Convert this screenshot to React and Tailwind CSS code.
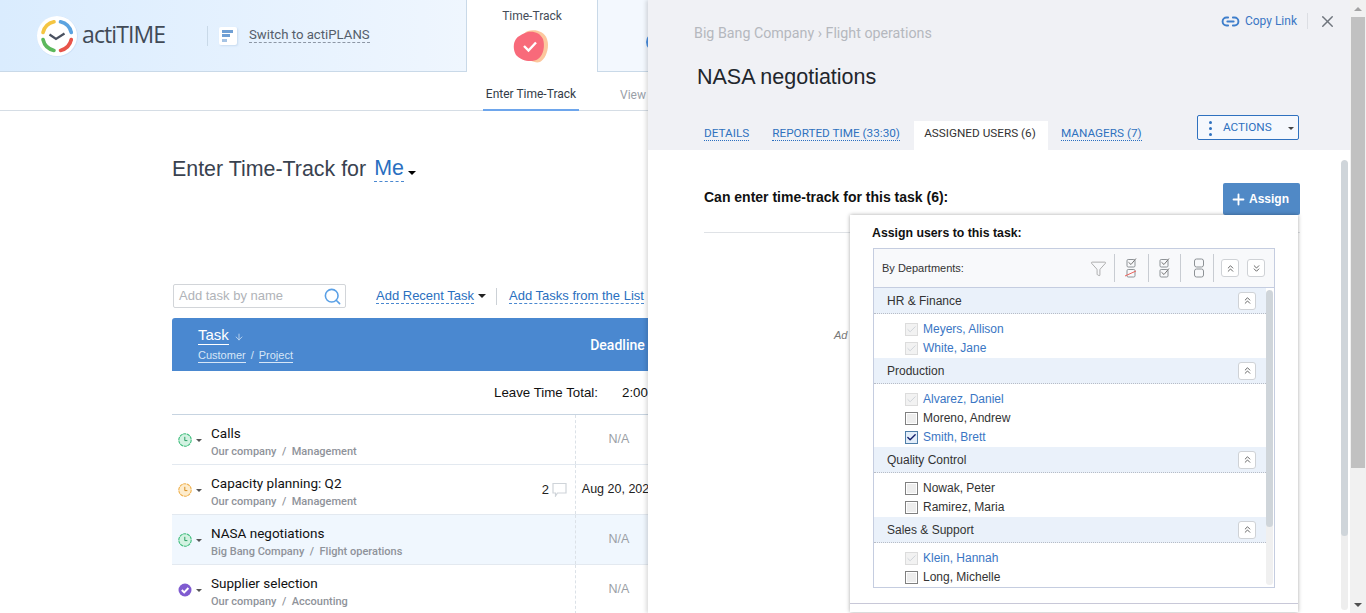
import React from "react";
import { Link2, X, ChevronsUp, ChevronsDown, Funnel, Search, ArrowDown, Plus, Check } from "lucide-react";

const Caret = ({ className = "" }) => (
  <span className={"inline-block w-0 h-0 border-x-[4px] border-x-transparent border-t-[4px] " + className} />
);
const SmallCaret = ({ className = "" }) => (
  <span className={"inline-block w-0 h-0 border-x-[3px] border-x-transparent border-t-[3px] " + className} />
);

const Logo = () => (
  <svg width="42" height="42" viewBox="0 0 42 42" className="shrink-0">
    <circle cx="21.5" cy="21.5" r="20.5" fill="#cfe2f8" />
    <circle cx="21" cy="21" r="20" fill="#fff" />
    <g fill="none" strokeWidth="3.6" strokeLinecap="round">
      <path d="M7 17.5A14.5 14.5 0 0 1 18 6.8" stroke="#f4c542" />
      <path d="M24.5 6.8A14.5 14.5 0 0 1 35.3 17.5" stroke="#5ba3e0" />
      <path d="M35.3 24.5A14.5 14.5 0 0 1 24.5 35.4" stroke="#e8544a" />
      <path d="M18 35.4A14.5 14.5 0 0 1 7 24.5" stroke="#5cb85c" />
    </g>
    <path d="M13.5 19.5L20 24L28.5 18.5" fill="none" stroke="#4a5160" strokeWidth="2.2" />
  </svg>
);

const TrackIcon = () => (
  <svg width="38" height="34" viewBox="0 0 38 34">
    <path d="M15 1C22 -1 31 1 34 9C37 17 33 29 27 32C20 34 10 28 8 18C7 10 9 3 15 1Z" fill="#fcc79d" />
    <path d="M12 3C18 0 27 2 30 9C32 15 31 25 25 29C19 33 8 31 3 25C0 20 0 13 3 9C5 6 8 5 12 3Z" fill="#f86a7a" />
    <path d="M11 16L15.5 20.5L23 12.5" fill="none" stroke="#fff" strokeWidth="2.4" />
  </svg>
);

const Status = ({ kind }) => {
  if (kind === "done")
    return (
      <svg width="14" height="14" viewBox="0 0 14 14">
        <circle cx="7" cy="7" r="6.5" fill="#7f5bd0" />
        <path d="M3.8 7L6.2 9.4L10.4 5" fill="none" stroke="#fff" strokeWidth="2" />
      </svg>
    );
  const c = kind === "orange" ? "#efb04c" : "#3ebd7c";
  const f = kind === "orange" ? "#fdeccd" : "#d3f2e2";
  return (
    <svg width="14" height="14" viewBox="0 0 14 14">
      <circle cx="7" cy="7" r="6.2" fill={f} stroke={c} strokeWidth="1.1" strokeDasharray="3.2 .6" />
      <path d="M6.8 3.8V7.6H9.4" fill="none" stroke={c === "#3ebd7c" ? "#2a9d63" : "#d78d1f"} strokeWidth="1" />
    </svg>
  );
};

const Row = ({ kind, title, sub1, sub2, deadline = "N/A", count, active }) => (
  <div className={"flex h-[50px] border-b border-[#e3e9f0] " + (active ? "bg-[#f0f7fe]" : "")}>
    <div className="w-[39px] flex items-center pl-[6px] gap-[4px] shrink-0">
      <Status kind={kind} />
      <SmallCaret className="border-t-[#555] mt-[1px]" />
    </div>
    <div className="flex-1 pt-[10px] min-w-0">
      <div className="text-[13.5px] leading-[17px] text-[#111] font-['Roboto',sans-serif]">{title}</div>
      <div className="text-[11px] leading-[14px] mt-[3px] text-[#8f939a] font-medium font-['Roboto',sans-serif] whitespace-pre">
        {sub1}  /  {sub2}
      </div>
    </div>
    {count && (
      <div className="flex items-center gap-[3px] pr-[8px] text-[13px] text-[#222]">
        {count}
        <svg width="15" height="15" viewBox="0 0 15 15">
          <path d="M1 1.5H14V11H5.5L3.5 14V11H1Z" fill="#fff" stroke="#cfd4d9" strokeWidth="1.2" />
        </svg>
      </div>
    )}
    <div
      className={
        "w-[87px] shrink-0 border-l border-dashed border-[#dbe1e7] flex items-center justify-center text-[12.5px] whitespace-nowrap pb-[1px] " +
        (deadline === "N/A" ? "text-[#9b9fa6]" : "text-[#222]")
      }
    >
      {deadline}
    </div>
  </div>
);

const Dashed = ({ children, className = "" }) => (
  <span className={"border-b border-dashed border-[#4a88d0] text-[#2a6fc0] leading-[15px] " + className}>{children}</span>
);

const Sep = ({ className = "mx-[10px]" }) => <span className={"w-px h-[28px] bg-[#c8ccd2] " + className} />;

const MiniBtn = ({ up = true }) => (
  <span className="w-[18px] h-[18px] rounded-[3px] bg-white border border-[#cfd2d6] flex items-center justify-center">
    {up ? <ChevronsUp size={11} strokeWidth={1.5} color="#222" /> : <ChevronsDown size={11} strokeWidth={1.5} color="#222" />}
  </span>
);

const BoxCheck = ({ y }) => (
  <g>
    <rect x="2" y={y} width="8" height="7.5" rx="1.2" fill="none" stroke="#8d9296" strokeWidth="1" />
    <path d={`M3.5 ${y + 2.8}L6 ${y + 5}L11 ${y - 1}`} fill="none" stroke="#777" strokeWidth="1" />
  </g>
);

const Person = ({ name, state }) => (
  <div className="h-[19px] flex items-center pl-[31px] gap-[5px]">
    {state === "off" && (
      <span className="mt-[1px] w-[13px] h-[13px] border border-[#808080] bg-[#ededed] shadow-[inset_0_0_0_1px_#fff]" />
    )}
    {state === "locked" && (
      <span className="mt-[1px] w-[13px] h-[13px] border border-[#dcdcdc] bg-[#f2f2f2] flex items-center justify-center">
        <Check size={11} strokeWidth={2} color="#ccd0d6" />
      </span>
    )}
    {state === "on" && (
      <span className="mt-[1px] w-[13px] h-[13px] border border-[#4f7ea8] bg-[#e3eefa] flex items-center justify-center">
        <Check size={11} strokeWidth={3} color="#14206b" />
      </span>
    )}
    <span className={"text-[12px] leading-[14px] " + (state === "off" ? "text-[#333]" : "text-[#3a76c4]")}>{name}</span>
  </div>
);

const Group = ({ name, people }) => (
  <div className="pb-[1px]">
    <div className="h-[26px] bg-[#eaf1fa] border-b border-dotted border-[#b7bcc6] flex items-center justify-between pl-[13px] pr-[10px]">
      <span className="text-[12px] text-[#333]">{name}</span>
      <MiniBtn />
    </div>
    <div className="pt-[5px]">
      {people.map((p) => (
        <Person key={p[0]} name={p[0]} state={p[1]} />
      ))}
    </div>
  </div>
);

export default function App() {
  return (
    <div className="flex w-[1366px] h-[613px] overflow-hidden bg-white font-['Liberation_Sans',sans-serif]">
      <div className="relative flex-1 min-w-0 overflow-hidden">
        {/* Header */}
        <div className="flex h-[72px]">
          <div className="w-[466px] shrink-0 h-[72px] border-b border-[#c9d9e8] bg-gradient-to-r from-[#daecfe] to-[#eff6fe] flex items-center pl-[36px]">
            <Logo />
            <span className="ml-[4px] -mt-[3px] w-[85px] text-[23px] leading-[30px] text-[#414a56] font-['Open_Sans',sans-serif] tracking-[-0.9px]">actiTIME</span>
            <span className="w-px h-[20px] bg-[#c9d9e8] ml-[40px]" />
            <span className="ml-[11px] w-[18px] h-[18px] bg-white rounded-[2px] shadow-[1px_1px_2px_#c9dcf0] flex flex-col gap-[1.5px] pl-[3px] pt-[3px]">
              <span className="w-[11px] h-[3px] bg-[#6f9fd4]" />
              <span className="w-[8px] h-[3px] bg-[#6f9fd4]" />
              <span className="w-[5px] h-[3px] bg-[#a5c3e4]" />
            </span>
            <span className="ml-[12px] -mt-[2px] text-[13.2px] leading-[15px] text-[#555e6b] border-b border-dashed border-[#8d97a5] font-['Roboto',sans-serif]">
              Switch to actiPLANS
            </span>
          </div>
          <div className="w-[132px] shrink-0 border-x border-[#c9d9e8] flex flex-col items-center pt-[9px]">
            <span className="text-[12px] leading-[15px] text-[#444c58] font-['Roboto',sans-serif]">Time-Track</span>
            <span className="mt-[6px]"><TrackIcon /></span>
          </div>
          <div className="flex-1 border-b border-[#c9d9e8] bg-[#f3f8fe] flex items-center pl-[48px]">
            <span className="w-[20px] h-[20px] rounded-full bg-[#4a90e2] mt-[13px]" />
          </div>
        </div>
        {/* Subnav */}
        <div className="h-[39px] border-b border-[#d5dde5] flex pl-[483px] items-stretch">
          <span className="w-[96px] border-b-[2px] border-[#6ea6ec] -mb-px flex items-center justify-center text-[12px] text-[#333c47] font-['Roboto',sans-serif] pt-[7px]">
            Enter Time-Track
          </span>
          <span className="ml-[41px] flex items-center text-[12px] text-[#9aa0a8] font-['Roboto',sans-serif] pt-[7px]">View</span>
        </div>

        <div className="pl-[172px]">
          <div className="pt-[45px] h-[172px] flex items-start text-[21.4px] leading-[26px] text-[#39424f]">
            Enter Time-Track for
            <span className="ml-[8px] text-[#2a6fc0] border-b border-dashed border-[#4a88d0] leading-[25px]">Me</span>
            <Caret className="border-t-black ml-[4px] mt-[15px]" />
          </div>
          <div className="flex items-center h-[24px] mt-[1px] text-[13px] whitespace-nowrap">
            <div className="w-[173px] h-[24px] ml-px border border-[#d2d5d9] rounded-[2px] flex items-center justify-between pl-[5px] pr-[3px] text-[#b0b3b8]">
              <span className="text-[13px]">Add task by name</span>
              <Search size={19} color="#5aa0e6" strokeWidth={2} />
            </div>
            <Dashed className="ml-[30px]">Add Recent Task</Dashed>
            <Caret className="border-t-[#222] ml-[4px]" />
            <span className="w-px h-[17px] bg-[#ccd1d6] ml-[10px] mr-[12px]" />
            <Dashed>Add Tasks from the List</Dashed>
          </div>
          {/* Table */}
          <div className="w-[490px] mt-[10px]">
            <div className="h-[53px] bg-[#4a88d0] rounded-t-[3px] flex text-white">
              <div className="flex-1 pl-[26px] pt-[8px]">
                <div className="flex items-center">
                  <span className="text-[15px] leading-[17px] border-b border-white pb-px">Task</span>
                  <ArrowDown size={10} className="ml-[5px] mt-[3px] text-[#c8dcf2]" />
                </div>
                <div className="text-[11px] leading-[13px] mt-[4px] flex gap-[5px] text-[#d7e6f7]">
                  <span className="border-b border-[#d7e6f7]">Customer</span>
                  <span>/</span>
                  <span className="border-b border-[#d7e6f7]">Project</span>
                </div>
              </div>
              <div className="w-[87px] flex items-center justify-center text-[14px] font-medium font-['Roboto',sans-serif] pr-[2px] pt-[2px]">Deadline</div>
            </div>
            <div className="h-[44px] border-b border-[#c7d4e1] flex items-center text-[13.3px] text-[#111] pt-[1px]">
              <span className="w-[426px] text-right">Leave Time Total:</span>
              <span className="ml-[24px]">2:00</span>
            </div>
            <Row kind="green" title="Calls" sub1="Our company" sub2="Management" />
            <Row kind="orange" title="Capacity planning: Q2" sub1="Our company" sub2="Management" count="2" deadline="Aug 20, 2020" />
            <Row kind="green" title="NASA negotiations" sub1="Big Bang Company" sub2="Flight operations" active />
            <Row kind="done" title="Supplier selection" sub1="Our company" sub2="Accounting" />
          </div>
        </div>

        {/* Side panel */}
        <div className="absolute top-0 right-0 bottom-0 w-[702px] bg-white shadow-[-2px_0_4px_rgba(0,0,0,0.14)] flex flex-col">
          <div className="h-[150px] shrink-0 bg-[#f0f1f5] flex flex-col">
            <div className="h-[116px] flex justify-between">
              <div className="pt-[25px] pl-[46px]">
                <div className="text-[14.25px] leading-[17px] text-[#b5b8be] font-['Roboto',sans-serif]">Big Bang Company › Flight operations</div>
                <div className="text-[21.5px] leading-[28px] text-[#22262c] mt-[21px] ml-[3px]">NASA negotiations</div>
              </div>
              <div className="flex items-start pt-[13px] pr-[13px]">
                <Link2 size={19} color="#3f7fcb" strokeWidth={2.4} className="-mt-px" />
                <span className="text-[12px] leading-[16px] text-[#3a76c4] ml-[5px] font-['Roboto',sans-serif]">Copy Link</span>
                <span className="w-px h-[16px] bg-[#dcdee3] mx-[10px]" />
                <X size={19} color="#6f757d" strokeWidth={1.8} className="-mt-px" />
              </div>
            </div>
            <div className="flex-1 flex items-end pl-[56px] pr-[51px] text-[11.75px] font-['Roboto',sans-serif] whitespace-nowrap">
              <div className="h-[29px] pb-[3px] flex items-center">
                <span className="border-b border-dotted border-[#2a6fc0] text-[#2f71bf] leading-[13px]">DETAILS</span>
              </div>
              <div className="h-[29px] pb-[3px] ml-[23px] flex items-center">
                <span className="border-b border-dotted border-[#2a6fc0] text-[#2f71bf] leading-[13px]">REPORTED TIME (33:30)</span>
              </div>
              <div className="h-[29px] pb-[4px] pr-[2px] w-[134px] ml-[14px] bg-white flex items-center justify-center text-[#333]">ASSIGNED USERS (6)</div>
              <div className="h-[29px] pb-[3px] ml-[13px] flex items-center">
                <span className="border-b border-dotted border-[#2a6fc0] text-[#2f71bf] leading-[13px]">MANAGERS (7)</span>
              </div>
            </div>
          </div>
          <div className="flex-1 flex min-h-0 relative">
            <div className="flex-1 pl-[56px] pr-[41px] pt-[33px]">
              <div className="flex justify-between items-start">
                <span className="text-[14px] leading-[28px] font-bold text-[#111]">Can enter time-track for this task (6):</span>
              </div>
              <div className="h-px bg-[#dfe2e6] mt-[21px]" />
              <div className="text-[11px] italic text-[#777] mt-[94px] ml-[130px]">Ad</div>
            </div>
            <div className="w-[7px] mr-[2px] mt-[10px] mb-[3px] rounded-[4px] bg-[#eeeeee] overflow-hidden">
              <div className="h-[376px] bg-[#cfd5da] rounded-[4px]" />
            </div>

            {/* Assign button */}
            <button className="absolute left-[575px] top-[33px] w-[77px] h-[32px] rounded-[2px] bg-[#5089c6] text-white text-[12px] font-bold flex items-center pl-[7px] gap-[2px]">
              <Plus size={17} strokeWidth={2.6} />
              Assign
            </button>

            {/* Dropdown */}
            <div className="absolute left-[202px] top-[65px] w-[448px] h-[397px] bg-white shadow-[0_0_4px_rgba(0,0,0,0.35)] flex flex-col">
              <div className="h-[33px] pl-[22px] pt-[10px] text-[12.3px] leading-[16px] font-bold text-[#111] shrink-0">Assign users to this task:</div>
              <div className="ml-[23px] w-[402px] h-[340px] border border-[#c5cde0] flex flex-col shrink-0">
                <div className="h-[39px] shrink-0 bg-[#f8f9fb] border-b border-[#c5cde0] flex items-center pl-[8px] pr-[9px] justify-between">
                  <span className="text-[11px] text-[#333]">By Departments:</span>
                  <div className="flex items-center">
                    <Funnel size={17} color="#8f8f8f" strokeWidth={1} />
                    <Sep className="ml-[7px] mr-[10px]" />
                    <svg width="13" height="22" viewBox="0 0 13 22">
                      <BoxCheck y={2.5} />
                      <rect x="2" y="12.5" width="8" height="7.5" rx="1.2" fill="none" stroke="#8d9296" />
                      <path d="M0 19L11 14" stroke="#e8605a" strokeWidth="1" />
                    </svg>
                    <Sep className="ml-[10px] mr-[9px]" />
                    <svg width="13" height="22" viewBox="0 0 13 22">
                      <BoxCheck y={2.5} />
                      <BoxCheck y={12.5} />
                    </svg>
                    <Sep className="ml-[9px] mr-[12px]" />
                    <svg width="12" height="20" viewBox="0 0 12 20">
                      <rect x="1.5" y="1" width="9" height="8" rx="2" fill="none" stroke="#8d9296" />
                      <rect x="1.5" y="11" width="9" height="8" rx="2" fill="none" stroke="#8d9296" />
                    </svg>
                    <Sep className="ml-[8px] mr-[7px]" />
                    <MiniBtn />
                    <span className="w-[8px]" />
                    <MiniBtn up={false} />
                  </div>
                </div>
                <div className="flex-1 flex min-h-0 overflow-hidden">
                  <div className="flex-1 min-w-0 overflow-hidden">
                    <Group name="HR & Finance" people={[["Meyers, Allison", "locked"], ["White, Jane", "locked"]]} />
                    <Group name="Production" people={[["Alvarez, Daniel", "locked"], ["Moreno, Andrew", "off"], ["Smith, Brett", "on"]]} />
                    <Group name="Quality Control" people={[["Nowak, Peter", "off"], ["Ramirez, Maria", "off"]]} />
                    <Group name="Sales & Support" people={[["Klein, Hannah", "locked"], ["Long, Michelle", "off"]]} />
                  </div>
                  <div className="w-[7px] mr-px mt-[2px] mb-[2px] rounded-[4px] bg-[#f0f0f0] overflow-hidden shrink-0">
                    <div className="h-[237px] bg-[#cfd5da] rounded-[4px]" />
                  </div>
                </div>
              </div>
              <div className="mt-[15px] border-t border-[#c8c8d8] flex-1" />
            </div>

            {/* Actions */}
            <div className="absolute right-[51px] top-[-35px] w-[102px] h-[25px] rounded-[2px] border border-[#2f71bf] bg-[#f5f8fd] flex items-center pl-[11px] pr-[4px] pt-[1px] text-[11.75px] text-[#2f71bf] font-['Roboto',sans-serif]">
              <span className="flex flex-col gap-[3px] mr-[11px]">
                <span className="w-[3px] h-[3px] rounded-full bg-[#2f71bf]" />
                <span className="w-[3px] h-[3px] rounded-full bg-[#2f71bf]" />
                <span className="w-[3px] h-[3px] rounded-full bg-[#2f71bf]" />
              </span>
              ACTIONS
              <SmallCaret className="ml-auto border-t-[#444]" />
            </div>
          </div>
        </div>
      </div>

      {/* Page scrollbar */}
      <div className="w-[16px] shrink-0 bg-[#f1f1f1] flex flex-col items-center">
        <div className="h-[17px] flex items-center justify-center">
          <span className="w-0 h-0 border-x-[4px] border-x-transparent border-b-[4px] border-b-[#a3a3a3]" />
        </div>
        <div className="w-[14px] h-[451px] bg-[#c1c1c1]" />
        <div className="flex-1 flex items-end pb-[6px]">
          <span className="w-0 h-0 border-x-[4px] border-x-transparent border-t-[4px] border-t-[#505050]" />
        </div>
      </div>
    </div>
  );
}
